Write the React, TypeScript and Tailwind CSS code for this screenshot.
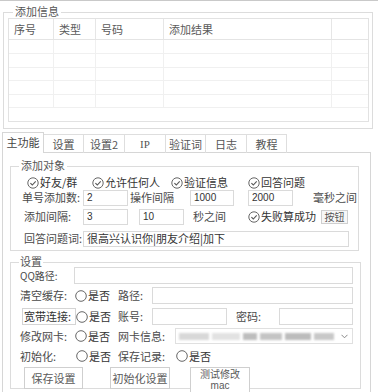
import React from "react";

const Check = () => (
  <svg width="12" height="12" viewBox="0 0 12 12" className="shrink-0">
    <circle cx="6" cy="6" r="5.2" fill="none" stroke="#666" strokeWidth="1" />
    <path d="M3.4 6.1 L5.3 8 L8.7 4.3" fill="none" stroke="#555" strokeWidth="1.1" />
  </svg>
);

const Radio = () => (
  <svg width="12" height="12" viewBox="0 0 12 12" className="shrink-0">
    <circle cx="6" cy="6" r="5.3" fill="#fff" stroke="#666" strokeWidth="1" />
  </svg>
);

const Input = ({ w, v, h = "h-[16px]" }: { w: string; v?: string; h?: string }) => (
  <div className={`${w} ${h} shrink-0 border border-[#dadada] bg-white flex items-center pl-[3px] text-[10px] text-[#333] font-['Liberation_Sans',sans-serif]`}>
    {v}
  </div>
);

export default function App() {
  const cols = ["w-[45px]", "w-[42px]", "w-[68px]", "w-[168px]"];
  const heads = ["序号", "类型", "号码", "添加结果"];
  const rowH = ["h-[14px]", "h-[14px]", "h-[13px]", "h-[14px]", "h-[13px]"];
  return (
    <div className="w-[378px] h-[392px] overflow-hidden bg-white border-t border-[#c9c9c9] text-[11px] leading-none text-[#4a4a4a] font-['Noto_Sans_CJK_SC',sans-serif]">
      {/* 添加信息 group */}
      <div className="relative mt-[11px] ml-[3px] w-[370px] h-[117px] border border-[#dcdcdc]">
        <div className="absolute left-[9px] -top-[7px] px-[2px] bg-white text-[#555]">添加信息</div>
        <div className="ml-[4px] mt-[5px] w-[361px] h-[104px] border border-[#e2e2e2] flex flex-col">
          <div className="flex h-[21px] border-b border-[#e4e4e4] text-[#5a5a5a]">
            {heads.map((t, i) => (
              <div key={i} className={`${cols[i]} border-r border-[#e6e6e6] flex items-center pl-[5px]`}>{t}</div>
            ))}
            <div className="flex-1" />
          </div>
          {rowH.map((h, r) => (
            <div key={r} className={`flex ${h} border-b border-[#f0f0f0]`}>
              {cols.map((c, i) => (
                <div key={i} className={`${c} border-r border-[#f0f0f0]`} />
              ))}
              <div className="flex-1" />
            </div>
          ))}
        </div>
      </div>

      {/* tabs */}
      <div className="relative z-10 mt-[3px] ml-[2px] flex items-end h-[21px] text-[#555]">
        <div className="w-[42px] h-[21px] border-l border-t border-r border-[#d6d6d6] bg-white flex items-center justify-center pb-[1px] text-[#444]">主功能</div>
        <div className="w-[40px] h-[19px] border-t border-r border-[#dedede] flex items-center justify-center">设置</div>
        <div className="w-[41px] h-[19px] border-t border-r border-[#dedede] flex items-center justify-center">设置2</div>
        <div className="w-[41px] h-[19px] border-t border-r border-[#dedede] flex items-center justify-center font-['Liberation_Serif',serif]">IP</div>
        <div className="w-[40px] h-[19px] border-t border-r border-[#dedede] flex items-center justify-center">验证词</div>
        <div className="w-[41px] h-[19px] border-t border-r border-[#dedede] flex items-center justify-center">日志</div>
        <div className="w-[40px] h-[19px] border-t border-r border-[#dedede] flex items-center justify-center">教程</div>
      </div>

      {/* panel */}
      <div className="-mt-px ml-[2px] w-[369px] h-[300px] border border-[#d6d6d6] pt-[13px] pl-[7px]">
        {/* 添加对象 */}
        <div className="relative w-[349px] h-[85px] border border-[#dcdcdc]">
          <div className="absolute left-[8px] -top-[7px] px-[2px] bg-white text-[#555]">添加对象</div>
          <div className="mt-[9px] h-[13px] flex items-center pl-[16px] text-[#333]">
            <div className="w-[65px] flex items-center gap-[1px]"><Check /><span>好友/群</span></div>
            <div className="w-[79px] flex items-center gap-[1px]"><Check /><span>允许任何人</span></div>
            <div className="w-[77px] flex items-center gap-[1px]"><Check /><span>验证信息</span></div>
            <div className="flex items-center gap-[1px]"><Check /><span>回答问题</span></div>
          </div>
          <div className="h-[17px] flex items-center pl-[11px]">
            <div className="w-[61px]">单号添加数:</div>
            <Input w="w-[45px]" v="2" />
            <div className="w-[62px] pl-[2px]">操作间隔</div>
            <Input w="w-[44px]" v="1000" />
            <div className="w-[14px]" />
            <Input w="w-[45px]" v="2000" />
            <div className="pl-[20px]">毫秒之间</div>
          </div>
          <div className="mt-[2px] h-[17px] flex items-center pl-[13px]">
            <div className="w-[59px]">添加间隔:</div>
            <Input w="w-[45px]" v="3" />
            <div className="w-[11px]" />
            <Input w="w-[45px]" v="10" />
            <div className="w-[64px] pl-[9px]">秒之间</div>
            <div className="w-[73px] flex items-center gap-[1px] text-[#333]"><Check /><span>失败算成功</span></div>
            <div className="w-[27px] h-[14px] border border-[#cfcfcf] bg-[#f7f7f7] flex items-center justify-center text-[10px] text-[#555]">按钮</div>
          </div>
          <div className="mt-[5px] h-[17px] flex items-center pl-[13px]">
            <div className="w-[59px]">回答问题词:</div>
            <div className="w-[266px] h-[16px] border border-[#dadada] flex items-center pl-[3px] text-[#333]">很高兴认识你|朋友介绍|加下</div>
          </div>
        </div>

        {/* 设置 */}
        <div className="relative mt-[11px] w-[351px] h-[127px] border border-[#dcdcdc]">
          <div className="absolute left-[8px] -top-[7px] px-[1px] bg-white text-[#555]">设置</div>
          <div className="mt-[4px] h-[17px] flex items-center pl-[9px]">
            <div className="w-[54px] text-[10px]">QQ路径:</div>
            <Input w="w-[279px]" h="h-[17px]" />
          </div>
          <div className="mt-[3px] h-[17px] flex items-center pl-[9px]">
            <div className="w-[55px]">清空缓存:</div>
            <div className="w-[43px] flex items-center gap-[1px] text-[#333]"><Radio /><span>是否</span></div>
            <div className="w-[34px]">路径:</div>
            <Input w="w-[201px]" h="h-[17px]" />
          </div>
          <div className="mt-[4px] h-[17px] flex items-center pl-[11px]">
            <div className="w-[54px] h-[17px] border border-[#d4d4d4] flex items-center pl-[1px] text-[#333]">宽带连接:</div>
            <div className="w-[42px] flex items-center gap-[1px] text-[#333]"><Radio /><span>是否</span></div>
            <div className="w-[34px]">账号:</div>
            <Input w="w-[75px]" h="h-[17px]" />
            <div className="w-[52px] pl-[9px]">密码:</div>
            <Input w="w-[74px]" h="h-[17px]" />
          </div>
          <div className="mt-[3px] h-[16px] flex items-center pl-[9px]">
            <div className="w-[55px]">修改网卡:</div>
            <div className="w-[43px] flex items-center gap-[1px] text-[#333]"><Radio /><span>是否</span></div>
            <div className="w-[57px]">网卡信息:</div>
            <div className="w-[178px] h-[16px] border border-[#e0e0e0] flex items-center pl-[3px] pr-[4px] gap-[3px]">
              <div className="w-[30px] h-[7px] bg-[#d8d8d8] blur-[1px]" />
              <div className="w-[28px] h-[7px] bg-[#e2e2e2] blur-[1px]" />
              <div className="w-[14px] h-[7px] bg-[#bdbdbd] blur-[1px]" />
              <div className="w-[22px] h-[7px] bg-[#c4c4c4] blur-[1px]" />
              <div className="w-[26px] h-[7px] bg-[#bcbcbc] blur-[1px]" />
              <div className="w-[20px] h-[7px] bg-[#c8c8c8] blur-[1px]" />
              <div className="flex-1" />
              <svg width="7" height="5" viewBox="0 0 7 5"><path d="M0.5 0.8 L3.5 3.8 L6.5 0.8" fill="none" stroke="#888" strokeWidth="1" /></svg>
            </div>
          </div>
          <div className="mt-[5px] h-[14px] flex items-center pl-[9px]">
            <div className="w-[56px]">初始化:</div>
            <div className="w-[42px] flex items-center gap-[1px] text-[#333]"><Radio /><span>是否</span></div>
            <div className="w-[58px]">保存记录:</div>
            <div className="flex items-center gap-[1px] text-[#333]"><Radio /><span>是否</span></div>
          </div>
          <div className="mt-[4px] flex items-start pl-[13px] text-[#5a5a5a]">
            <div className="w-[59px] h-[22px] border border-[#cfcfcf] bg-white flex items-center justify-center">保存设置</div>
            <div className="ml-[27px] w-[60px] h-[22px] border border-[#cfcfcf] bg-white flex items-center justify-center">初始化设置</div>
            <div className="ml-[20px] w-[60px] h-[26px] border border-[#cfcfcf] bg-white flex flex-col items-center justify-center text-[10px] leading-[12px]">
              <span>测试修改</span>
              <span className="font-['Liberation_Sans',sans-serif]">mac</span>
            </div>
          </div>
        </div>
      </div>
    </div>
  );
}
